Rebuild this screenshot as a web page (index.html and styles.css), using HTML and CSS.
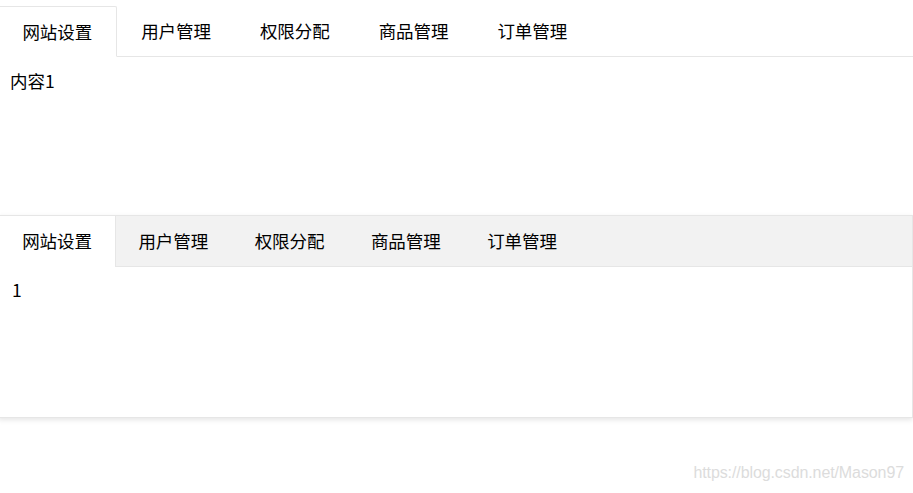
FILE: index.html
```html
<!DOCTYPE html>
<html lang="zh-CN">
<head>
<meta charset="utf-8">
<title>Tabs</title>
<link rel="stylesheet" href="styles.css">
</head>
<body>
<div class="page">
  <div class="tab tab-brief">
    <ul class="tab-title">
      <li class="active">网站设置</li>
      <li>用户管理</li>
      <li>权限分配</li>
      <li>商品管理</li>
      <li>订单管理</li>
    </ul>
    <div class="tab-content">内容1</div>
  </div>

  <div class="tab tab-card">
    <ul class="tab-title">
      <li class="active">网站设置</li>
      <li>用户管理</li>
      <li>权限分配</li>
      <li>商品管理</li>
      <li>订单管理</li>
    </ul>
    <div class="tab-content">1</div>
  </div>
</div>
<div class="watermark">https://blog.csdn.net/Mason97</div>
</body>
</html>
```

FILE: styles.css
```css
html, body {
  margin: 0;
  padding: 0;
  background: #fff;
}

body {
  font-family: "Noto Sans CJK SC", "Noto Sans", sans-serif;
  font-size: 17.5px;
  color: #000;
  height: 493px;
  overflow: hidden;
  position: relative;
}

.page {
  display: flex;
  flex-direction: column;
  padding-top: 6px;
}

.tab {
  margin-left: -2px;
}

.tab-title {
  display: flex;
  margin: 0;
  padding: 0;
  list-style: none;
  height: 50px;
  border-bottom: 1px solid #e6e6e6;
}

.tab-title li {
  line-height: 50px;
  white-space: nowrap;
  box-sizing: border-box;
  border: 1px solid transparent;
  border-bottom: none;
  border-top: none;
}

/* brief style */
.tab-brief .tab-title li {
  padding: 0 23.375px;
}

.tab-brief .tab-title li.active {
  border: 1px solid #e6e6e6;
  border-bottom: 1px solid #fff;
  border-radius: 2px 2px 0 0;
  line-height: 49px;
  height: 51px;
  background: #fff;
}

.tab-brief .tab-content {
  height: 146px;
  padding: 11px 12px 0;
  line-height: 26px;
  box-sizing: border-box;
}

/* card style */
.tab-card {
  margin-top: 12px;
  border: 1px solid #e6e6e6;
  box-shadow: 0 2px 5px 0 rgba(0, 0, 0, 0.1);
}

.tab-card .tab-title {
  background: #f2f2f2;
}

.tab-card .tab-title li {
  padding: 0 23.125px;
  margin: 0 -1px;
}

.tab-card .tab-title li.active {
  background: #fff;
  border-left-color: #e6e6e6;
  border-right-color: #e6e6e6;
  height: 51px;
}

.tab-card .tab-content {
  height: 150px;
  padding: 10px 13px 0;
  line-height: 26px;
  box-sizing: border-box;
}

.watermark {
  position: absolute;
  right: 9px;
  top: 464px;
  font-family: "Liberation Sans", Arial, sans-serif;
  font-size: 16px;
  color: #dcdcdc;
  letter-spacing: -0.1px;
}
```
